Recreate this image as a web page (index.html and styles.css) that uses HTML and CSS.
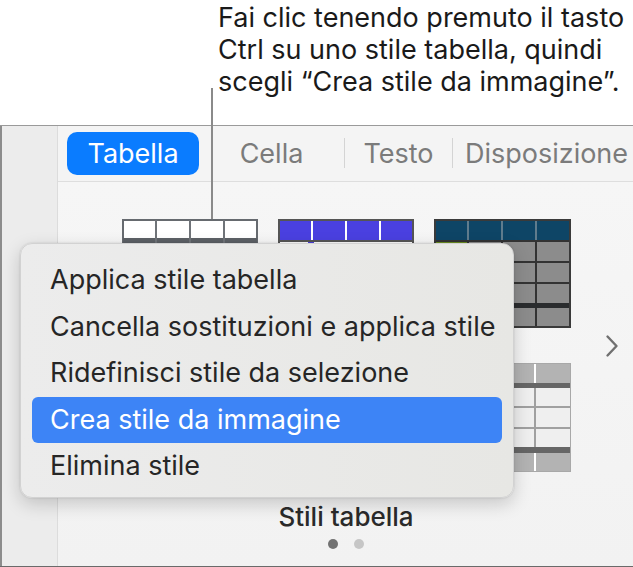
FILE: index.html
```html
<!DOCTYPE html>
<html lang="it">
<head>
<meta charset="utf-8">
<link rel="stylesheet" href="styles.css">
</head>
<body>
<div class="page">
  <div class="callout">Fai clic tenendo premuto il tasto<br>Ctrl su uno stile tabella, quindi<br>scegli “Crea stile da immagine”.</div>
  <div class="panel">
    <div class="sidebar"></div>
    <div class="main">
      <div class="tabs">
        <div class="tab tab-active">Tabella</div>
        <div class="tab tab-cella">Cella</div>
        <div class="sep"></div>
        <div class="tab tab-testo">Testo</div>
        <div class="sep"></div>
        <div class="tab tab-disp">Disposizione</div>
      </div>
      <div class="content">
        <div class="gallery">
          <div class="grid">
            <svg class="thumb" viewBox="0 0 136 109" width="136" height="109">
              <rect x="1" y="1" width="134" height="107" fill="#ffffff" stroke="#666a6f" stroke-width="2"/>
              <rect x="1" y="19" width="134" height="6" fill="#5c6065"/>
              <g stroke="#6f7378" stroke-width="2"><line x1="34" y1="1" x2="34" y2="108"/><line x1="68" y1="1" x2="68" y2="108"/><line x1="102" y1="1" x2="102" y2="108"/><line x1="1" y1="45" x2="135" y2="45"/><line x1="1" y1="65" x2="135" y2="65"/><line x1="1" y1="85" x2="135" y2="85"/></g>
            </svg>
            <svg class="thumb" viewBox="0 0 136 109" width="136" height="109">
              <rect x="1" y="1" width="134" height="107" fill="#ffffff" stroke="#555555" stroke-width="2"/>
              <rect x="2" y="2" width="132" height="19" fill="#4a40e0"/>
              <line x1="1" y1="22" x2="135" y2="22" stroke="#555" stroke-width="2"/>
              <g stroke="#ffffff" stroke-width="2"><line x1="34" y1="2" x2="34" y2="21"/><line x1="68" y1="2" x2="68" y2="21"/><line x1="102" y1="2" x2="102" y2="21"/></g>
              <rect x="30" y="23" width="6" height="3" fill="#4a40e0"/>
            </svg>
            <svg class="thumb" viewBox="0 0 137 109" width="137" height="109">
              <rect x="0" y="0" width="137" height="109" fill="#8c8c8c"/>
              <rect x="1" y="1" width="135" height="21" fill="#0e4566"/>
              <rect x="1" y="23" width="33" height="20" fill="#6b8e23"/>
              <g stroke="#7d8f9b" stroke-width="1.5"><line x1="34" y1="1" x2="34" y2="22"/><line x1="68" y1="1" x2="68" y2="22"/><line x1="102" y1="1" x2="102" y2="22"/></g>
              <g stroke="#333" stroke-width="2"><line x1="34" y1="22" x2="34" y2="108"/><line x1="68" y1="22" x2="68" y2="108"/><line x1="102" y1="22" x2="102" y2="108"/><line x1="0" y1="22" x2="137" y2="22"/><line x1="0" y1="43" x2="137" y2="43"/><line x1="0" y1="64" x2="137" y2="64"/></g>
              <rect x="0" y="84" width="137" height="5" fill="#2a2c2e"/>
              <rect x="1" y="1" width="135" height="107" fill="none" stroke="#3a3a3a" stroke-width="2"/>
            </svg>
            <svg class="thumb" viewBox="0 0 136 109" width="136" height="109">
              <rect x="0" y="0" width="136" height="109" fill="#f2f2f2" stroke="#999" stroke-width="2"/>
              <rect x="1" y="1" width="134" height="20" fill="#c9c9c9"/>
              <g stroke="#b5b5b5" stroke-width="2"><line x1="34" y1="21" x2="34" y2="108"/><line x1="68" y1="21" x2="68" y2="108"/><line x1="102" y1="21" x2="102" y2="108"/><line x1="0" y1="44" x2="136" y2="44"/><line x1="0" y1="66" x2="136" y2="66"/><line x1="0" y1="88" x2="136" y2="88"/></g>
            </svg>
            <svg class="thumb" viewBox="0 0 136 109" width="136" height="109">
              <rect x="1" y="1" width="134" height="107" fill="#ececec" stroke="#777" stroke-width="2"/>
              <rect x="1" y="1" width="134" height="20" fill="#7a7a7a"/>
              <g stroke="#aaa" stroke-width="2"><line x1="34" y1="21" x2="34" y2="108"/><line x1="68" y1="21" x2="68" y2="108"/><line x1="102" y1="21" x2="102" y2="108"/><line x1="0" y1="44" x2="136" y2="44"/><line x1="0" y1="66" x2="136" y2="66"/><line x1="0" y1="88" x2="136" y2="88"/></g>
            </svg>
            <svg class="thumb" viewBox="0 0 137 109" width="137" height="109">
              <rect x="0" y="0" width="137" height="109" fill="#efefef"/>
              <rect x="0" y="0" width="137" height="20" fill="#b3b3b3"/>
              <rect x="0" y="20" width="137" height="5" fill="#666666"/>
              <rect x="0" y="89" width="137" height="20" fill="#b3b3b3"/>
              <rect x="0" y="84" width="137" height="6" fill="#666666"/>
              <g stroke="#a0a0a0" stroke-width="2"><line x1="0" y1="44" x2="137" y2="44"/><line x1="0" y1="65" x2="137" y2="65"/><line x1="34" y1="25" x2="34" y2="84"/><line x1="68" y1="25" x2="68" y2="84"/><line x1="101" y1="25" x2="101" y2="84"/></g>
              <g stroke="#ffffff" stroke-width="2"><line x1="34" y1="0" x2="34" y2="20"/><line x1="68" y1="0" x2="68" y2="20"/><line x1="101" y1="0" x2="101" y2="20"/><line x1="34" y1="90" x2="34" y2="109"/><line x1="68" y1="90" x2="68" y2="109"/><line x1="101" y1="90" x2="101" y2="109"/></g>
              <rect x="0.5" y="0.5" width="136" height="108" fill="none" stroke="#a8a8a8" stroke-width="1"/>
            </svg>
          </div>
          <svg class="chev" viewBox="0 0 14 24" width="14" height="24">
            <path d="M2.5 2.5 L11.5 12 L2.5 21.5" fill="none" stroke="#707070" stroke-width="2.4" stroke-linecap="round" stroke-linejoin="round"/>
          </svg>
        </div>
        <div class="label">Stili tabella</div>
        <div class="dots"><span class="dot dot-on"></span><span class="dot"></span></div>
      </div>
    </div>
  </div>
  <div class="leader"></div>
  <div class="menu">
    <div class="item">Applica stile tabella</div>
    <div class="item">Cancella sostituzioni e applica stile</div>
    <div class="item">Ridefinisci stile da selezione</div>
    <div class="item item-on">Crea stile da immagine</div>
    <div class="item">Elimina stile</div>
  </div>
</div>
</body>
</html>
```
FILE: styles.css
```css
* { box-sizing: border-box; }
html, body { margin: 0; padding: 0; background: #ffffff; }
body { width: 633px; height: 567px; overflow: hidden; font-family: "Inter", "Liberation Sans", sans-serif; }
.page { position: relative; width: 633px; height: 567px; }

.callout {
  height: 125px;
  padding: 2px 0 0 218px;
  font-size: 27px;
  line-height: 32px;
  color: #1a1a1a;
  white-space: nowrap;
}

.panel {
  display: flex;
  height: 442px;
  border-top: 1px solid #9a9a9a;
  border-bottom: 1px solid #6a6a6a;
  background: #f4f4f4;
}
.sidebar {
  width: 58px;
  flex-shrink: 0;
  background: #ececec;
  border-left: 2px solid #8c8c8c;
  border-right: 1px solid #dcdcdc;
}
.main { flex: 1; min-width: 0; overflow: hidden; display: flex; flex-direction: column; }

.tabs {
  height: 56px;
  flex-shrink: 0;
  display: flex;
  align-items: center;
  padding: 0 0 1px 9px;
  border-bottom: 1px solid #dedede;
  background: #f4f4f4;
}
.tab {
  flex-shrink: 0;
  text-align: center;
  font-size: 27px;
  line-height: 43px;
  color: #7b7b7b;
}
.tab-active {
  width: 132px;
  height: 43px;
  border-radius: 10px;
  background: #0a7cff;
  color: #ffffff;
}
.tab-cella { width: 145px; }
.tab-testo { width: 107px; }
.tab-disp { width: 187px; }
.sep { width: 1px; height: 30px; flex-shrink: 0; background: #d4d4d4; }

.content {
  flex: 1;
  display: flex;
  flex-direction: column;
  align-items: flex-start;
  padding: 37px 0 0 64px;
  background: linear-gradient(180deg, #f6f6f6, #f2f2f2);
}
.gallery { display: flex; align-items: center; }
.grid {
  display: grid;
  grid-template-columns: 136px 136px 137px;
  grid-template-rows: 109px 109px;
  column-gap: 20px;
  row-gap: 35px;
}
.thumb { display: block; }
.chev { margin-left: 34px; display: block; }

.label {
  width: 448px;
  margin-top: 32px;
  text-align: center;
  font-size: 26px;
  line-height: 26px;
  color: #2a2a2a;
  font-weight: 500;
}
.dots { width: 448px; display: flex; justify-content: center; gap: 16px; margin-top: 9px; }
.dot { width: 10px; height: 10px; border-radius: 50%; background: #c6c6c6; }
.dot-on { background: #727272; }

.leader {
  position: absolute;
  left: 211px;
  top: 88px;
  width: 2px;
  height: 131px;
  background: #8a8a8a;
}

.menu {
  position: absolute;
  left: 20px;
  top: 243px;
  width: 494px;
  height: 255px;
  padding: 13px 11px 9px;
  border-radius: 12px;
  background: linear-gradient(90deg, #ececec, #e7e7e4);
  border: 1px solid #d2d2d2;
  box-shadow: 0 6px 18px rgba(0,0,0,0.18), 0 0 2px rgba(0,0,0,0.15);
}
.item {
  height: 46.5px;
  line-height: 46.5px;
  padding-left: 18px;
  font-size: 27px;
  color: #262626;
  border-radius: 6px;
  white-space: nowrap;
}
.item-on { background: #3d84f6; color: #ffffff; }
```
